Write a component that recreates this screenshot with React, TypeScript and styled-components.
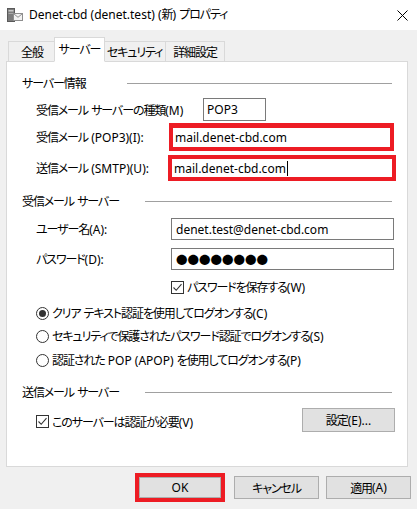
import React from "react";
import styled, { createGlobalStyle } from "styled-components";

const GlobalStyle = createGlobalStyle`
  html, body { margin: 0; padding: 0; background: #f0f0f0; }
  * { box-sizing: border-box; }
  body {
    font-family: "Noto Sans", "Noto Sans CJK JP", sans-serif;
    font-size: 12px;
    color: #000;
    font-feature-settings: "palt";
  }
`;

const Jp = styled.span`
  letter-spacing: -1.1px;
`;

const CJK_RE = /([\u3000-\u30ff\u3400-\u9fff\uff00-\uffef]+)/;

const T = ({ children }: { children: string }) => {
  const parts = children.split(CJK_RE).filter((s) => s.length > 0);
  return (
    <>
      {parts.map((p, i) => (CJK_RE.test(p) ? <Jp key={i}>{p}</Jp> : <React.Fragment key={i}>{p}</React.Fragment>))}
    </>
  );
};

const Window = styled.div`
  width: 417px;
  height: 509px;
  background: #f0f0f0;
  display: flex;
  flex-direction: column;
  overflow: hidden;
`;

const TitleBar = styled.div`
  height: 30px;
  background: #fff;
  display: flex;
  align-items: center;
  padding: 0 9px 0 7px;
  flex-shrink: 0;
`;

const TitleText = styled.div`
  flex: 1;
  margin-left: 6px;
  font-size: 12px;
  line-height: 16px;
  white-space: nowrap;
`;

const Body = styled.div`
  padding: 7px 0 0 6px;
  display: flex;
  flex-direction: column;
`;

const TabStrip = styled.div`
  display: flex;
  align-items: flex-end;
  padding-left: 2px;
  margin-bottom: -1px;
  position: relative;
  z-index: 1;
  height: 25px;
`;

const Tab = styled.div<{ $w: number; $active?: boolean; $ml?: number }>`
  width: ${(p) => p.$w}px;
  height: ${(p) => (p.$active ? 25 : 21)}px;
  margin-left: ${(p) => (p.$active ? -2 : p.$ml ?? 0)}px;
  margin-right: ${(p) => (p.$active ? -2 : 0)}px;
  background: ${(p) => (p.$active ? "#fff" : "#f0f0f0")};
  border: 1px solid #d9d9d9;
  border-bottom-color: ${(p) => (p.$active ? "#fff" : "#d9d9d9")};
  display: flex;
  align-items: center;
  justify-content: center;
  padding-bottom: ${(p) => (p.$active ? 2 : 0)}px;
  position: relative;
  z-index: ${(p) => (p.$active ? 2 : 1)};
  white-space: nowrap;
`;

const Panel = styled.div`
  width: 402px;
  height: 406px;
  background: #fff;
  border: 1px solid #d9d9d9;
  display: flex;
  flex-direction: column;
  padding-top: 13px;
`;

const GroupHeader = styled.div<{ $labelW: number; $mt?: number }>`
  display: flex;
  align-items: center;
  height: 16px;
  margin-top: ${(p) => p.$mt ?? 0}px;
  padding: 0 15px 0 15px;

  & > span {
    width: ${(p) => p.$labelW}px;
    flex-shrink: 0;
    white-space: nowrap;
  }
`;

const Rule = styled.div`
  flex: 1;
  height: 1px;
  background: #a0a0a0;
`;

const FieldRow = styled.div<{ $mt: number; $h: number }>`
  display: flex;
  align-items: center;
  margin-top: ${(p) => p.$mt}px;
  height: ${(p) => p.$h}px;
  padding-left: 29px;
  padding-right: 12px;
`;

const FieldLabel = styled.div`
  width: 135px;
  flex-shrink: 0;
  white-space: nowrap;
`;

const SmallBox = styled.div`
  margin-left: 32px;
  width: 63px;
  height: 23px;
  border: 1px solid #7a7a7a;
  display: flex;
  align-items: center;
  padding-left: 3px;
`;

const RedFrame = styled.div<{ $w: number; $h: number; $ml: number; $bt?: number }>`
  margin-left: ${(p) => p.$ml}px;
  width: ${(p) => p.$w}px;
  height: ${(p) => p.$h}px;
  border: 4px solid #ed1c24;
  border-top-width: ${(p) => p.$bt ?? 4}px;
  background: #fff;
  display: flex;
  align-items: center;
  padding-left: 2px;
  flex-shrink: 0;
`;

const TextBox = styled.div`
  width: 223px;
  height: 22px;
  border: 1px solid #7a7a7a;
  display: flex;
  align-items: center;
  padding-left: 4px;
`;

const Dots = styled.span`
  font-family: "Noto Sans CJK JP", sans-serif;
  font-size: 11.5px;
  letter-spacing: 0;
  font-feature-settings: normal;
`;

const Caret = styled.span`
  display: inline-block;
  width: 1px;
  height: 15px;
  background: #000;
  margin-left: 1px;
`;

const CheckRow = styled.div<{ $mt: number; $indent: number }>`
  display: flex;
  align-items: center;
  height: 16px;
  margin-top: ${(p) => p.$mt}px;
  padding-left: ${(p) => p.$indent}px;
  gap: 3px;
  white-space: nowrap;
`;

const CheckBoxMark = styled.span`
  width: 13px;
  height: 13px;
  border: 1px solid #333;
  background: #fff;
  display: inline-flex;
  align-items: center;
  justify-content: center;
  flex-shrink: 0;
`;

const RadioMark = styled.span<{ $on?: boolean }>`
  width: 13px;
  height: 13px;
  border: 1px solid #333;
  border-radius: 50%;
  background: #fff;
  display: inline-flex;
  align-items: center;
  justify-content: center;
  flex-shrink: 0;

  &::after {
    content: "";
    width: 7px;
    height: 7px;
    border-radius: 50%;
    background: ${(p) => (p.$on ? "#333" : "transparent")};
  }
`;

const BottomRow = styled.div`
  display: flex;
  align-items: center;
  margin-top: 8px;
  height: 24px;
  padding-left: 29px;
  padding-right: 12px;
`;

const Spacer = styled.div`
  flex: 1;
`;

const Button = styled.div<{ $w: number; $h: number }>`
  width: ${(p) => p.$w}px;
  height: ${(p) => p.$h}px;
  background: #e1e1e1;
  border: 1px solid #adadad;
  display: flex;
  align-items: center;
  justify-content: center;
  flex-shrink: 0;
  white-space: nowrap;
`;

const ButtonBar = styled.div`
  display: flex;
  align-items: center;
  justify-content: flex-end;
  gap: 7px;
  margin-top: 6px;
  padding-right: 6px;
`;

const OkFrame = styled.div`
  width: 90px;
  height: 29px;
  border: 4px solid #ed1c24;
  display: flex;
  margin-right: 2px;
`;

const Check = () => (
  <CheckBoxMark>
    <svg width="11" height="11" viewBox="0 0 11 11">
      <path d="M1.5 5.5 L4.2 8.3 L9.5 2.2" fill="none" stroke="#333" strokeWidth="1.1" />
    </svg>
  </CheckBoxMark>
);

const AppIcon = () => (
  <svg width="16" height="16" viewBox="0 0 16 16">
    <rect x="0.5" y="1.5" width="7" height="13" fill="#7c7c7c" stroke="#5a5a5a" />
    <rect x="1.5" y="3" width="5" height="1.5" fill="#c8c8c8" />
    <rect x="1.5" y="6" width="5" height="1" fill="#a8a8a8" />
    <rect x="6.5" y="6.5" width="9" height="7" fill="#f2f2f2" stroke="#8e8e8e" />
    <path d="M6.8 6.8 L11 10.3 L15.2 6.8" fill="none" stroke="#8e8e8e" />
  </svg>
);

const CloseIcon = () => (
  <svg width="11" height="11" viewBox="0 0 11 11">
    <path d="M0.5 0.5 L10.5 10.5 M10.5 0.5 L0.5 10.5" stroke="#000" strokeWidth="1" />
  </svg>
);

export default function App() {
  return (
    <>
      <GlobalStyle />
      <Window>
        <TitleBar>
          <AppIcon />
          <TitleText>
            <T>Denet-cbd (denet.test) (新) プロパティ</T>
          </TitleText>
          <CloseIcon />
        </TitleBar>
        <Body>
          <TabStrip>
            <Tab $w={48}><T>全般</T></Tab>
            <Tab $w={51} $active><T>サーバー</T></Tab>
            <Tab $w={63}><T>セキュリティ</T></Tab>
            <Tab $w={60} $ml={-1}><T>詳細設定</T></Tab>
          </TabStrip>
          <Panel>
            <GroupHeader $labelW={105}>
              <span><T>サーバー情報</T></span>
              <Rule />
            </GroupHeader>
            <FieldRow $mt={7} $h={23}>
              <FieldLabel><T>受信メール サーバーの種類(M)</T></FieldLabel>
              <SmallBox>POP3</SmallBox>
            </FieldRow>
            <FieldRow $mt={2} $h={28}>
              <FieldLabel><T>受信メール (POP3)(I):</T></FieldLabel>
              <RedFrame $w={225} $h={28} $ml={-2} $bt={5}>mail.denet-cbd.com</RedFrame>
            </FieldRow>
            <FieldRow $mt={4} $h={26}>
              <FieldLabel><T>送信メール (SMTP)(U):</T></FieldLabel>
              <RedFrame $w={228} $h={26} $ml={-3}>
                mail.denet-cbd.com
                <Caret />
              </RedFrame>
            </FieldRow>

            <GroupHeader $labelW={123} $mt={12}>
              <span><T>受信メール サーバー</T></span>
              <Rule />
            </GroupHeader>
            <FieldRow $mt={9} $h={22}>
              <FieldLabel><T>ユーザー名(A):</T></FieldLabel>
              <TextBox>denet.test@denet-cbd.com</TextBox>
            </FieldRow>
            <FieldRow $mt={8} $h={22}>
              <FieldLabel><T>パスワード(D):</T></FieldLabel>
              <TextBox>
                <Dots>●●●●●●●●</Dots>
              </TextBox>
            </FieldRow>
            <CheckRow $mt={9} $indent={164}>
              <Check />
              <span><T>パスワードを保存する(W)</T></span>
            </CheckRow>
            <CheckRow $mt={10} $indent={29}>
              <RadioMark $on />
              <span><T>クリア テキスト認証を使用してログオンする(C)</T></span>
            </CheckRow>
            <CheckRow $mt={7} $indent={29}>
              <RadioMark />
              <span><T>セキュリティで保護されたパスワード認証でログオンする(S)</T></span>
            </CheckRow>
            <CheckRow $mt={8} $indent={29}>
              <RadioMark />
              <span><T>認証された POP (APOP) を使用してログオンする(P)</T></span>
            </CheckRow>

            <GroupHeader $labelW={123} $mt={16}>
              <span><T>送信メール サーバー</T></span>
              <Rule />
            </GroupHeader>
            <BottomRow>
              <CheckRow $mt={3} $indent={0}>
                <Check />
                <span><T>このサーバーは認証が必要(V)</T></span>
              </CheckRow>
              <Spacer />
              <Button $w={93} $h={24}><T>設定(E)...</T></Button>
            </BottomRow>
          </Panel>
          <ButtonBar>
            <OkFrame>
              <Button $w={82} $h={21}>OK</Button>
            </OkFrame>
            <Button $w={85} $h={23}><T>キャンセル</T></Button>
            <Button $w={85} $h={23}><T>適用(A)</T></Button>
          </ButtonBar>
        </Body>
      </Window>
    </>
  );
}
